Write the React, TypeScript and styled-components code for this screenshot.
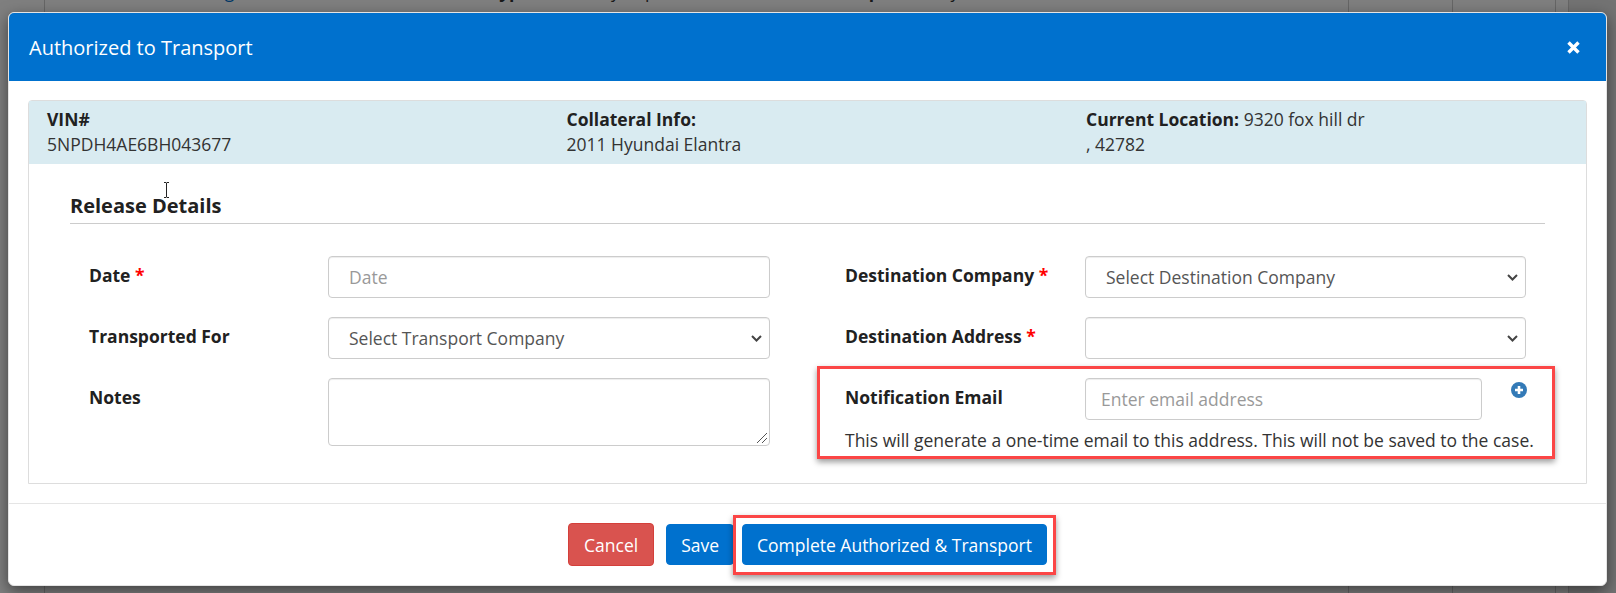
import { createGlobalStyle, styled } from 'styled-components';

const GlobalStyle = createGlobalStyle`
  html,
  body {
    margin: 0;
    height: 100%;
    overflow: hidden;
    background: #fff;
    font-family: 'Open Sans', 'Liberation Sans', sans-serif;
    font-size: 17.5px;
    color: #333;
  }
`;

const Page = styled.div`
  position: relative;
  width: 1616px;
  height: 593px;
  overflow: hidden;
`;

const BackdropColumns = styled.div`
  display: grid;
  grid-template-columns: 45px 1304px 104px 103px 13px 1fr;
  height: 100%;
`;

const BackdropColumn = styled.div`
  border-right: 1px solid #ccc;
  overflow: hidden;

  &:last-child {
    border-right: 0;
    background: #e6e6e6;
  }
`;

const ClippedText = styled.div`
  display: flex;
  margin-top: -20px;
  padding-left: 160px;
  line-height: 22px;
  white-space: nowrap;
`;

const BackdropText = styled.span<{ $width: number; $link?: boolean; $bold?: boolean }>`
  flex: none;
  width: ${(p) => p.$width}px;
  color: ${(p) => (p.$link ? '#0071ce' : 'inherit')};
  font-weight: ${(p) => (p.$bold ? 700 : 400)};
`;

const Overlay = styled.div`
  position: absolute;
  inset: 0;
  background: rgba(0, 0, 0, 0.5);
`;

const Modal = styled.div`
  position: absolute;
  left: 8px;
  top: 12px;
  width: 1599px;
  height: 574px;
  box-sizing: border-box;
  display: flex;
  flex-direction: column;
  background: #fff;
  border: 1px solid #e4e4e4;
  border-radius: 6px;
  box-shadow: 0 5px 15px rgba(0, 0, 0, 0.5);
`;

const Header = styled.div`
  display: flex;
  align-items: center;
  justify-content: space-between;
  height: 68px;
  padding: 0 25px 0 20px;
  background: #0071ce;
  border-radius: 5px 5px 0 0;
  color: #fff;
  font-size: 20px;
`;

const CloseButton = styled.button`
  display: flex;
  padding: 0;
  border: 0;
  background: none;
  color: #fff;
`;

const Body = styled.div`
  padding: 19px;
  height: 422px;
  box-sizing: border-box;
`;

const Panel = styled.div`
  height: 384px;
  box-sizing: border-box;
  border: 1px solid #ddd;
  border-radius: 4px 4px 0 0;
`;

const InfoStrip = styled.div`
  display: grid;
  grid-template-columns: repeat(3, 519.5px);
  height: 63px;
  padding: 6px 18px 0;
  box-sizing: border-box;
  background: #d9ebf1;
  line-height: 25px;
`;

const InfoItem = styled.div`
  white-space: pre-line;
`;

const Strong = styled.strong`
  font-weight: 700;
  color: #212121;
`;

const Details = styled.div`
  padding: 29px 41px 0 41px;
`;

const SectionTitle = styled.h4`
  margin: 0 0 32px;
  padding-bottom: 4px;
  border-bottom: 1px solid #ccc;
  font-size: 20px;
  font-weight: 700;
  line-height: 26px;
  color: #212121;
`;

const FormGrid = styled.div`
  display: grid;
  grid-template-columns: 681px 681px;
  column-gap: 75px;
  padding-left: 19px;
`;

const FormColumn = styled.div`
  display: flex;
  flex-direction: column;
  gap: 19px;
`;

const Field = styled.div<{ $labelWidth: number }>`
  display: grid;
  grid-template-columns: ${(p) => p.$labelWidth}px 1fr;
  align-items: start;
`;

const Label = styled.label`
  padding-top: 7px;
  font-weight: 700;
  line-height: 24px;
  color: #212121;
`;

const Required = styled.span`
  color: #f00;
`;

const controlStyles = `
  display: block;
  width: 100%;
  box-sizing: border-box;
  border: 1px solid #ccc;
  border-radius: 4px;
  background-color: #fff;
  box-shadow: inset 0 1px 1px rgba(0, 0, 0, 0.075);
  font: inherit;
  color: #555;

  &::placeholder {
    color: #999;
    opacity: 1;
  }
`;

const Input = styled.input`
  ${controlStyles}
  height: 42px;
  padding: 0 20px;
`;

const EmailInput = styled.input`
  ${controlStyles}
  width: 397px;
  height: 42px;
  padding: 0 15px;
`;

const chevron =
  "url(\"data:image/svg+xml,%3Csvg xmlns='http://www.w3.org/2000/svg' width='11' height='7' viewBox='0 0 11 7'%3E%3Cpath d='M1 1l4.5 4.5L10 1' fill='none' stroke='%23444' stroke-width='2'/%3E%3C/svg%3E\")";

const resizeGrip =
  "url(\"data:image/svg+xml,%3Csvg xmlns='http://www.w3.org/2000/svg' width='15' height='15' viewBox='0 0 15 15'%3E%3Cpath d='M13 3L3 13M13 8L8 13' fill='none' stroke='%23555' stroke-width='1'/%3E%3C/svg%3E\")";

const Select = styled.select`
  ${controlStyles}
  appearance: none;
  height: 42px;
  padding: 0 24px 0 20px;
  background-image: ${chevron};
  background-repeat: no-repeat;
  background-position: right 7px center;
`;

const TextArea = styled.textarea`
  ${controlStyles}
  height: 68px;
  padding: 6px 20px;

  &::-webkit-resizer {
    background-image: ${resizeGrip};
  }
`;

const EmailRow = styled.div`
  display: flex;
  align-items: flex-start;
  gap: 29px;
`;

const AddIcon = styled.svg`
  margin-top: 4px;
  flex: none;
`;

const HelpText = styled.div`
  margin-top: 8px;
  line-height: 24px;
  white-space: nowrap;
`;

const Footer = styled.div`
  display: flex;
  flex: 1;
  align-items: flex-start;
  justify-content: center;
  gap: 8px;
  padding-top: 19px;
  border-top: 1px solid #e5e5e5;
`;

const Button = styled.button<{ $danger?: boolean }>`
  height: ${(p) => (p.$danger ? 43 : 41)}px;
  margin-top: ${(p) => (p.$danger ? 0 : 1)}px;
  margin-right: ${(p) => (p.$danger ? 4 : 0)}px;
  padding: 0 ${(p) => (p.$danger ? 15 : 14)}px;
  border: 1px solid ${(p) => (p.$danger ? '#d43f3a' : '#0071ce')};
  border-radius: 4px;
  background: ${(p) => (p.$danger ? '#d9534f' : '#0071ce')};
  color: #fff;
  font: inherit;
`;

// annotation frames drawn over the screenshot
const Callout = styled.div<{ $left: number; $top: number; $width: number; $height: number }>`
  position: absolute;
  left: ${(p) => p.$left}px;
  top: ${(p) => p.$top}px;
  width: ${(p) => p.$width}px;
  height: ${(p) => p.$height}px;
  box-sizing: border-box;
  border: 3px solid #fb4646;
  box-shadow: 0 3px 6px rgba(0, 0, 0, 0.4);
  pointer-events: none;
`;

// the mouse pointer caught in the screenshot
const TextCursor = styled.svg`
  position: absolute;
  left: 163px;
  top: 182px;
`;

export default function App() {
  return (
    <Page>
      <GlobalStyle />
      <BackdropColumns>
        <BackdropColumn />
        <BackdropColumn>
          <ClippedText>
            <BackdropText $width={284} $link>
              Logistics
            </BackdropText>
            <BackdropText $width={52} $bold>
              Type:
            </BackdropText>
            <BackdropText $width={318}>Voluntary Repo</BackdropText>
            <BackdropText $width={66} $bold>
              Spot:
            </BackdropText>
            <BackdropText $width={200}>May 15, 2024</BackdropText>
          </ClippedText>
        </BackdropColumn>
        <BackdropColumn />
        <BackdropColumn />
        <BackdropColumn />
        <BackdropColumn />
      </BackdropColumns>
      <Overlay />
      <Modal>
        <Header>
          Authorized to Transport
          <CloseButton aria-label="Close">
            <svg width="15" height="15" viewBox="0 0 15 15">
              <path d="M2.5 2.5l10 10M12.5 2.5l-10 10" stroke="currentColor" strokeWidth="3.4" />
            </svg>
          </CloseButton>
        </Header>
        <Body>
          <Panel>
            <InfoStrip>
              <InfoItem>
                <Strong>VIN#</Strong>
                {'\n'}5NPDH4AE6BH043677
              </InfoItem>
              <InfoItem>
                <Strong>Collateral Info:</Strong>
                {'\n'}2011 Hyundai Elantra
              </InfoItem>
              <InfoItem>
                <Strong>Current Location:</Strong> 9320 fox hill dr{'\n'}, 42782
              </InfoItem>
            </InfoStrip>
            <Details>
              <SectionTitle>Release Details</SectionTitle>
              <FormGrid>
                <FormColumn>
                  <Field $labelWidth={239}>
                    <Label>
                      Date <Required>*</Required>
                    </Label>
                    <Input placeholder="Date" />
                  </Field>
                  <Field $labelWidth={239}>
                    <Label>Transported For</Label>
                    <Select>
                      <option>Select Transport Company</option>
                    </Select>
                  </Field>
                  <Field $labelWidth={239}>
                    <Label>Notes</Label>
                    <TextArea />
                  </Field>
                </FormColumn>
                <FormColumn>
                  <Field $labelWidth={240}>
                    <Label>
                      Destination Company <Required>*</Required>
                    </Label>
                    <Select>
                      <option>Select Destination Company</option>
                    </Select>
                  </Field>
                  <Field $labelWidth={240}>
                    <Label>
                      Destination Address <Required>*</Required>
                    </Label>
                    <Select>
                      <option></option>
                    </Select>
                  </Field>
                  <div>
                    <Field $labelWidth={240}>
                      <Label>Notification Email</Label>
                      <EmailRow>
                        <EmailInput placeholder="Enter email address" />
                        <AddIcon width="16" height="16" viewBox="0 0 16 16">
                          <circle cx="8" cy="8" r="8" fill="#337ab7" />
                          <path d="M8 4v8M4 8h8" stroke="#fff" strokeWidth="2.6" />
                        </AddIcon>
                      </EmailRow>
                    </Field>
                    <HelpText>
                      This will generate a one-time email to this address. This will not be saved to the case.
                    </HelpText>
                  </div>
                </FormColumn>
              </FormGrid>
            </Details>
          </Panel>
        </Body>
        <Footer>
          <Button $danger>Cancel</Button>
          <Button>Save</Button>
          <Button>Complete Authorized &amp; Transport</Button>
        </Footer>
        <Callout $left={808} $top={353} $width={738} $height={93} />
        <Callout $left={724} $top={502} $width={323} $height={60} />
      </Modal>
      <TextCursor width="7" height="16" viewBox="0 0 7 16">
        <path d="M1 .5h2l.5.5.5-.5h2M3.5 1v14M1 15.5h2l.5-.5.5.5h2" fill="none" stroke="#222" strokeWidth="1" />
      </TextCursor>
    </Page>
  );
}
